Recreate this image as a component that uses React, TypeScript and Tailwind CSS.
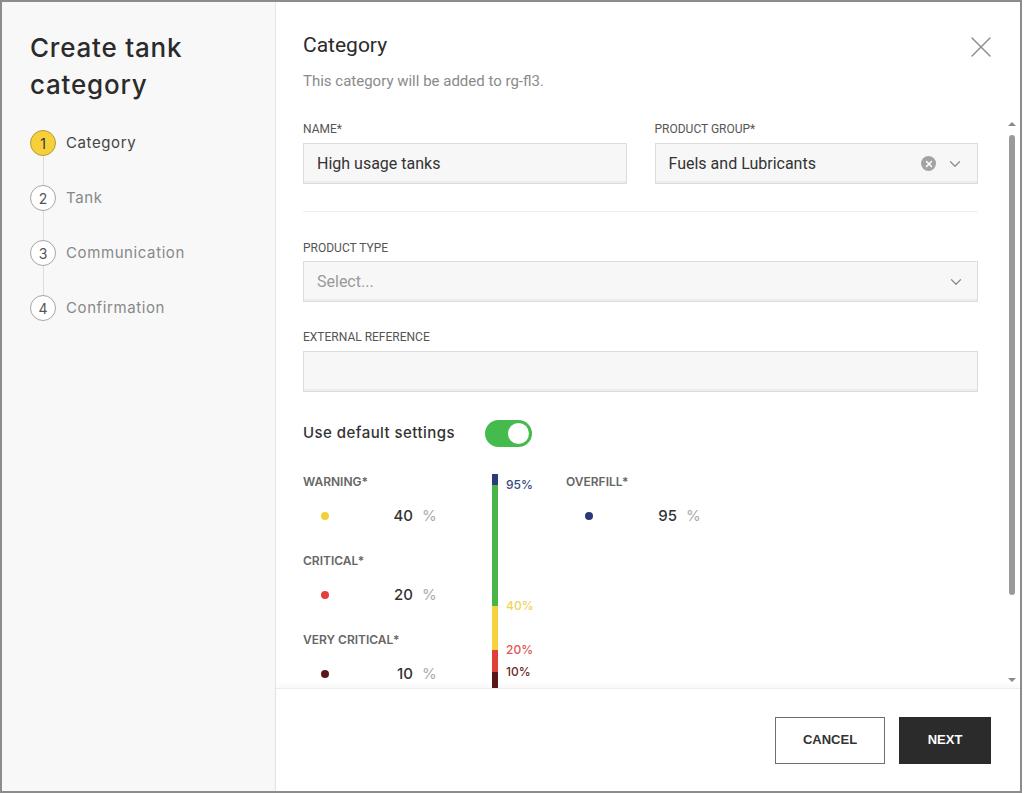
import { X, ChevronDown } from 'lucide-react';

const STEPS = ['Category', 'Tank', 'Communication', 'Confirmation'];

const LEFT_LEVELS = [
  { label: 'WARNING*', value: 40, dot: 'bg-[#f3cf3a]' },
  { label: 'CRITICAL*', value: 20, dot: 'bg-[#e3403a]' },
  { label: 'VERY CRITICAL*', value: 10, dot: 'bg-[#5e1616]' },
];

// bar segments, top to bottom
const SEGMENTS = [
  { from: 100, to: 95, color: '#2c3b78' },
  { from: 95, to: 40, color: '#48b54b' },
  { from: 40, to: 20, color: '#f5d23e' },
  { from: 20, to: 10, color: '#e0403a' },
  { from: 10, to: 0, color: '#5a1717' },
];

const MARKS = [
  { value: 95, className: 'text-[#3a4a82]' },
  { value: 40, className: 'text-[#f1d35a]' },
  { value: 20, className: 'text-[#e05555]' },
  { value: 10, className: 'text-[#6b2a2a]' },
];

const PX_PER_PCT = 2.2;

const Level = ({ label, value, dot, dotGap }: { label: string; value: number; dot: string; dotGap: string }) => (
  <div>
    <div className="text-[12px] leading-4 font-semibold text-[#666] font-['Inter',sans-serif]">{label}</div>
    <div className="mt-4 h-5 flex items-center font-['Inter',sans-serif]">
      <span className={`${dotGap} w-2 h-2 rounded-full ${dot}`} />
      <span className="w-[84px] text-right text-[15px] font-medium text-[#333]">{value}</span>
      <span className="ml-[9px] text-[15px] text-[#aaa]">%</span>
    </div>
  </div>
);

export default function App() {
  return (
    <div className="w-[1022px] h-[793px] border-2 border-[#8c8c8c] flex bg-white overflow-hidden">
      <aside className="w-[274px] shrink-0 bg-[#f8f8f8] border-r border-[#e6e6e6] pl-[28px] pt-[27px] font-['Inter',sans-serif]">
        <h1 className="text-[26px] leading-[37px] font-medium tracking-[0.03em] text-[#2b2b2b]">
          Create tank
          <br />
          category
        </h1>
        <ol className="mt-[27px]">
          {STEPS.map((step, i) => (
            <li key={step}>
              {i > 0 && <div className="ml-[12.5px] w-px h-[29px] bg-[#dcdcdc]" />}
              <div className="flex items-center gap-[10px]">
                <span
                  className={
                    i === 0
                      ? 'w-[26px] h-[26px] rounded-full border border-[#b89a2a] bg-[#f6d03c] flex items-center justify-center text-[14px] text-[#333]'
                      : 'w-[26px] h-[26px] rounded-full border border-[#a5a5a5] bg-white flex items-center justify-center text-[14px] text-[#555]'
                  }
                >
                  {i + 1}
                </span>
                <span className={i === 0 ? 'text-[15px] tracking-[0.04em] text-[#444]' : 'text-[15px] tracking-[0.04em] text-[#888]'}>
                  {step}
                </span>
              </div>
            </li>
          ))}
        </ol>
      </aside>

      <section className="flex-1 min-w-0 flex flex-col font-['Roboto',sans-serif]">
        <header className="h-[113px] shrink-0 pl-[27px] pr-[21px] pt-[29px] flex justify-between items-start">
          <div>
            <h2 className="text-[21px] leading-7 text-[#2b2b2b]">Category</h2>
            <p className="mt-3 text-[15px] leading-5 text-[#8a8a8a]">This category will be added to rg-fl3.</p>
          </div>
          <X className="-mt-[2px] w-9 h-9 text-[#8f8f8f]" strokeWidth={1} />
        </header>

        <div className="flex-1 min-h-0 flex">
          <div className="flex-1 min-w-0 overflow-hidden pl-[27px] pr-[26px] pt-[6px]">
            <div className="grid grid-cols-2 gap-x-[28px]">
              <div>
                <label className="block text-[12px] leading-4 text-[#555]">NAME*</label>
                <div className="mt-[6px] h-[41px] bg-[#f7f7f7] border border-[#dcdcdc] shadow-[inset_0_-2px_0_#ececec] flex items-center px-[13px] text-[16px] text-[#333]">
                  High usage tanks
                </div>
              </div>
              <div>
                <label className="block text-[12px] leading-4 text-[#555]">PRODUCT GROUP*</label>
                <div className="mt-[6px] h-[41px] bg-[#f7f7f7] border border-[#dcdcdc] shadow-[inset_0_-2px_0_#ececec] flex items-center pl-[13px] pr-[13px] text-[16px] text-[#333]">
                  <span className="flex-1">Fuels and Lubricants</span>
                  <span className="w-[15px] h-[15px] rounded-full bg-[#a3a3a3] flex items-center justify-center">
                    <X className="w-[10px] h-[10px] text-white" strokeWidth={3.5} />
                  </span>
                  <ChevronDown className="ml-[10px] w-[18px] h-[18px] text-[#8a8a8a]" strokeWidth={1.6} />
                </div>
              </div>
            </div>

            <div className="mt-[27px] h-px bg-[#eeeeee]" />

            <label className="mt-[28px] block text-[12px] leading-4 text-[#555]">PRODUCT TYPE</label>
            <div className="mt-[5px] h-[41px] bg-[#f7f7f7] border border-[#dcdcdc] shadow-[inset_0_-2px_0_#ececec] flex items-center pl-[13px] pr-[12px] text-[16px] text-[#9a9a9a]">
              <span className="flex-1">Select...</span>
              <ChevronDown className="w-[18px] h-[18px] text-[#8a8a8a]" strokeWidth={1.6} />
            </div>

            <label className="mt-[27px] block text-[12px] leading-4 text-[#555]">EXTERNAL REFERENCE</label>
            <div className="mt-[6px] h-[41px] bg-[#f7f7f7] border border-[#dcdcdc] shadow-[inset_0_-2px_0_#ececec]" />

            <div className="mt-[28px] flex items-center gap-[30px] font-['Inter',sans-serif]">
              <span className="text-[15px] font-medium tracking-[0.03em] text-[#333]">Use default settings</span>
              <span className="w-[47px] h-[27px] rounded-full bg-[#44bb4c] flex items-center justify-end pr-[3px]">
                <span className="w-[21px] h-[21px] rounded-full bg-white" />
              </span>
            </div>

            <div className="mt-[27px] flex">
              <div className="w-[189px] shrink-0 flex flex-col gap-[27px]">
                {LEFT_LEVELS.map((l) => (
                  <Level key={l.label} label={l.label} value={l.value} dot={l.dot} dotGap="ml-[18px]" />
                ))}
              </div>

              <div className="w-[74px] shrink-0 relative h-[220px] font-['Inter',sans-serif]">
                <div className="w-[6px] flex flex-col">
                  {SEGMENTS.map((s) => (
                    <div key={s.from} style={{ height: (s.from - s.to) * PX_PER_PCT, backgroundColor: s.color }} />
                  ))}
                </div>
                {MARKS.map((m) => (
                  <span
                    key={m.value}
                    className={`absolute left-[14px] text-[12px] leading-4 font-medium ${m.className}`}
                    style={{ top: (100 - m.value) * PX_PER_PCT - 8 }}
                  >
                    {m.value}%
                  </span>
                ))}
              </div>

              <div>
                <Level label="OVERFILL*" value={95} dot="bg-[#2a3978]" dotGap="ml-[19px]" />
              </div>
            </div>
          </div>

          <div className="w-[16px] shrink-0 flex flex-col items-center pt-[7px] pb-[6px]">
            <span className="w-0 h-0 border-x-[4px] border-x-transparent border-b-[4px] border-b-[#8a8a8a]" />
            <span className="mt-[9px] w-[6px] h-[460px] rounded-full bg-[#9a9a9a]" />
            <span className="flex-1" />
            <span className="w-0 h-0 border-x-[4px] border-x-transparent border-t-[4px] border-t-[#8a8a8a]" />
          </div>
        </div>

        <footer className="h-[103px] shrink-0 border-t border-[#ededed] shadow-[0_-3px_5px_rgba(0,0,0,0.03)] flex items-center justify-end gap-[14px] pr-[29px] font-['Liberation_Sans',Arial,sans-serif]">
          <button className="w-[110px] h-[47px] border border-[#6f6f6f] bg-white text-[13px] font-bold text-[#333]">
            CANCEL
          </button>
          <button className="w-[92px] h-[47px] bg-[#2b2b2b] text-[13px] font-bold text-white">NEXT</button>
        </footer>
      </section>
    </div>
  );
}
